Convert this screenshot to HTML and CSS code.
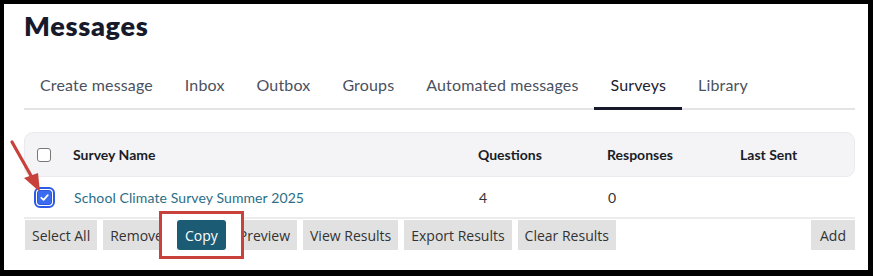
FILE: index.html
```html
<!DOCTYPE html>
<html>
<head>
<meta charset="utf-8">
<link rel="stylesheet" href="styles.css">
</head>
<body>
<div class="page">
  <h1 class="title">Messages</h1>
  <nav class="tabs">
    <span class="tab">Create message</span>
    <span class="tab">Inbox</span>
    <span class="tab">Outbox</span>
    <span class="tab">Groups</span>
    <span class="tab">Automated messages</span>
    <span class="tab active">Surveys</span>
    <span class="tab">Library</span>
  </nav>
  <div class="table">
    <div class="thead">
      <div class="cell"><span class="cb"></span></div>
      <div class="cell">Survey Name</div>
      <div class="cell">Questions</div>
      <div class="cell">Responses</div>
      <div class="cell">Last Sent</div>
    </div>
    <div class="trow">
      <div class="cell"><span class="cb checked"><svg viewBox="0 0 12 12" width="11" height="11"><path d="M2.5 6.3 L5 8.6 L9.6 3.4" fill="none" stroke="#fff" stroke-width="1.9" stroke-linecap="round" stroke-linejoin="round"/></svg></span></div>
      <div class="cell"><a class="link">School Climate Survey Summer 2025</a></div>
      <div class="cell num">4</div>
      <div class="cell num">0</div>
      <div class="cell"></div>
    </div>
  </div>
  <div class="actions">
    <button class="btn">Select All</button>
    <button class="btn">Remove</button>
    <span class="hl"><button class="btn primary">Copy</button></span>
    <button class="btn">Preview</button>
    <button class="btn">View Results</button>
    <button class="btn">Export Results</button>
    <button class="btn">Clear Results</button>
    <button class="btn add">Add</button>
  </div>
  <svg class="arrow" width="40" height="60" viewBox="0 0 40 60">
    <line x1="4" y1="6" x2="26" y2="45" stroke="#c8423b" stroke-width="3.2" stroke-linecap="round"/>
    <polygon points="32,56 16,42 30,37" fill="#c8423b"/>
  </svg>
</div>
</body>
</html>
```
FILE: styles.css
```css
html, body { margin: 0; padding: 0; }
body {
  background: #000;
  width: 873px;
  height: 276px;
  overflow: hidden;
}
.page {
  position: relative;
  margin: 4px 5px 0 4px;
  height: 266px;
  background: #fff;
  padding: 0 13px 0 20px;
  box-sizing: border-box;
  font-family: Lato, "Open Sans", sans-serif;
}
.title {
  margin: 0;
  padding-top: 5px;
  font-size: 27px;
  line-height: 34px;
  font-weight: 800;
  color: #161a2b;
  letter-spacing: 0.7px;
}
.tabs {
  display: flex;
  margin-top: 18px;
  border-bottom: 2px solid #e4e4e7;
}
.tab {
  padding: 14px 16px 12px;
  font-size: 16px;
  line-height: 20px;
  letter-spacing: 0.15px;
  color: #4a5160;
  margin-bottom: -2px;
  border-bottom: 3px solid transparent;
}
.tab.active {
  color: #1d2130;
  border-bottom-color: #161a2b;
}
.table { margin-top: 22px; }
.thead, .trow {
  display: grid;
  grid-template-columns: 48px 405px 129px 133px 1fr;
  align-items: center;
}
.thead {
  height: 43px;
  background: #f4f4f6;
  border: 1px solid #eaeaee;
  border-radius: 9px;
  font-weight: 700;
  font-size: 14px;
  color: #1a1d28;
}
.thead .cell:first-child { padding-left: 12px; }
.trow {
  height: 40px;
  border-bottom: 2px solid #ececef;
  font-size: 14px;
  color: #333;
}
.trow .cell:first-child { padding-left: 12px; }
.cb {
  display: block;
  width: 12px;
  height: 12px;
  border: 1px solid #777;
  border-radius: 3px;
  background: #fff;
}
.cb.checked {
  width: 13px;
  height: 13px;
  border: 1px solid #2f5bd8;
  background: #3b6cf0;
  outline: 2px solid #2a5ae6;
  outline-offset: 1px;
  display: flex;
  align-items: center;
  justify-content: center;
  margin-left: 1px;
}
.link {
  color: #2b6e87;
  font-size: 14px;
  padding-left: 2px;
  letter-spacing: 0.1px;
}
.num { padding-left: 2px; }
.actions {
  display: flex;
  gap: 6px;
  margin-top: 1px;
  padding-left: 1px;
  align-items: center;
}
.btn {
  font-family: "Open Sans", sans-serif;
  font-size: 14px;
  height: 30px;
  padding: 0 7px;
  border: none;
  background: #e1e1e1;
  color: #333;
  border-radius: 0;
}
.hl {
  position: relative;
  display: inline-flex;
  margin-left: 1px;
}
.hl::before {
  content: "";
  position: absolute;
  left: -18px;
  right: -18px;
  top: -9px;
  bottom: -9px;
  border: 3px solid #c8423b;
  background: #fff;
}
.btn.primary {
  position: relative;
  background: #1c5b74;
  color: #fff;
  border-radius: 3px;
  padding: 0 8px;
}
.btn.add { margin-left: auto; padding: 0 9px; }
.arrow {
  position: absolute;
  left: 4px;
  top: 132px;
}
```
